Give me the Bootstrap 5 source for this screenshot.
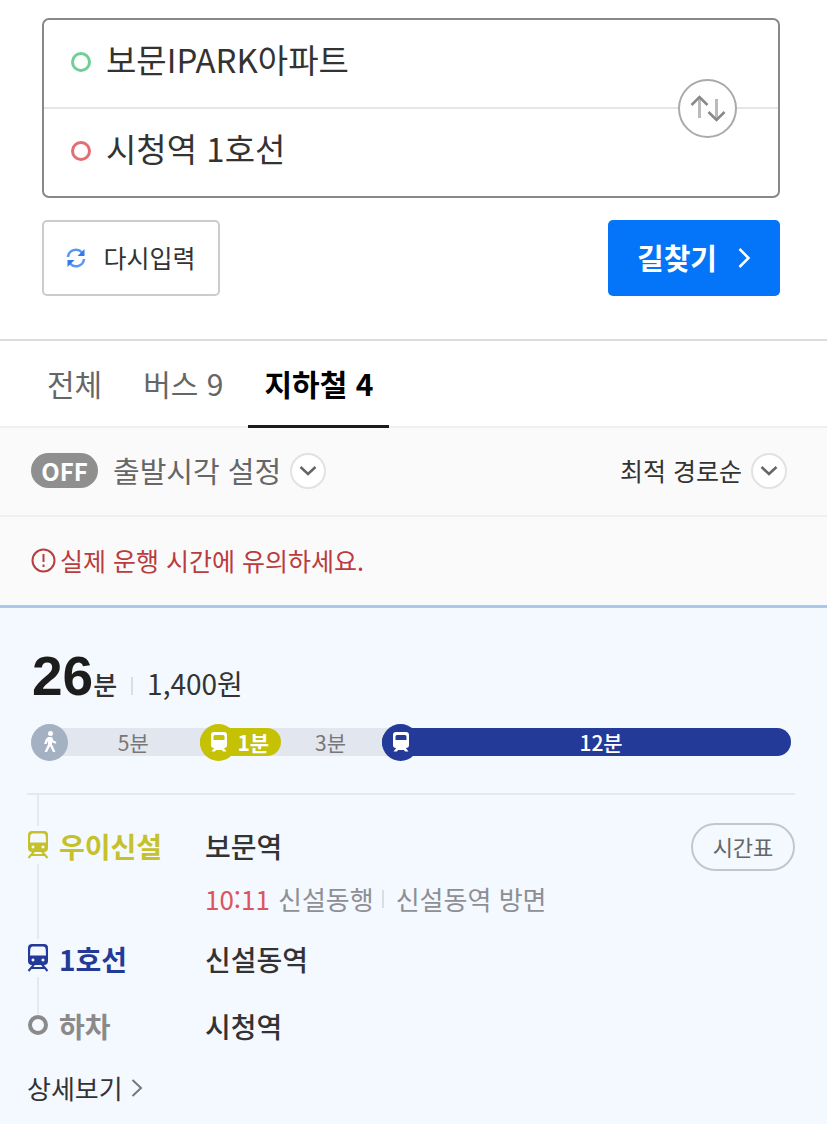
<!DOCTYPE html>
<html lang="ko">
<head>
<meta charset="utf-8">
<meta name="viewport" content="width=device-width, initial-scale=1">
<title>길찾기</title>
<link href="https://cdn.jsdelivr.net/npm/bootstrap@5.3.0/dist/css/bootstrap.min.css" rel="stylesheet">
<style>
  body { font-family: "Noto Sans CJK KR", sans-serif; color: #333; line-height: 36px; }
  button, input { font-family: inherit; }
  .search-area { padding: 18px 47px 43px 42px; border-bottom: 2px solid #ddd; }
  .route-box { border: 2px solid #888; border-radius: 7px; }
  .route-row { height: 87px; padding: 0 100px 3px 27px; gap: 15px; }
  .route-row + .route-row { border-top: 2px solid #e5e5e5; height: 89px; }
  .route-row .form-control { font-size: 33px; line-height: 48px; color: #333; box-shadow: none; padding: 0 0 6px; }
  .point { width: 20px; height: 20px; border: 3px solid #6fcf97; border-radius: 50%; }
  .point-end { border-color: #e26d74; }
  .swap { right: 41px; top: 59px; width: 59px; height: 59px; border: 2px solid #aaa; border-radius: 50%; background: #fff; }
  .action-row { margin-top: 22px; }
  .action-row .btn { height: 76px; border-radius: 5px; }
  .btn-reset { width: 178px; border: 2px solid #ccc; font-size: 25px; color: #333; gap: 17px; background: #fff; }
  .btn-find { width: 172px; font-size: 29px; font-weight: 700; color: #fff; background: #0475f8; gap: 21px; }
  .btn-find:hover { color: #fff; background: #0467db; }
  .mode-tabs { padding-left: 31px; gap: 9px; border-bottom: 2px solid #f0f0f0; }
  .mode-tabs .nav-link { padding: 24px 16px; margin-bottom: -2px; font-size: 30px; line-height: 36px; color: #666; border-bottom: 3px solid transparent; border-radius: 0; }
  .mode-tabs .active { color: #000; font-weight: 700; border-bottom-color: #1c1c1e; }
  .option-row { height: 89px; padding: 0 40px 2px 31px; background: #fafafa; border-bottom: 2px solid #f0f0f0; }
  .off-pill { width: 67px; height: 35px; border-radius: 18px; background: #8f8f8f; color: #fff; font-size: 24px; font-weight: 700; line-height: 33px; }
  .drop { font-size: 25px; color: #333; gap: 9px; }
  .drop-time { font-size: 29px; color: #666; margin-left: 15px; }
  .chev { width: 36px; height: 36px; border: 2px solid #e2e2e2; border-radius: 50%; background: #fff; }
  .notice { height: 91px; padding: 0 31px 2px; gap: 4px; font-size: 25px; color: #b93c3f; background: #fafafa; border-bottom: 3px solid #aac8ee; }
  .result { padding: 32px 32px 14px 27px; background: #f4f8ff; }
  .summary { padding-left: 5px; height: 72px; padding-top: 8px; }
  .minutes { font: 700 55px/56px "Liberation Sans", sans-serif; color: #1c1c1c; }
  .minutes-unit { font-size: 26px; font-weight: 500; }
  .fare { font-size: 28px; }
  .bar-sep { width: 2px; height: 18px; background: #d9dde5; margin: 0 14px; }
  .leg-bar { margin: 11px 4px 0; padding: 5px 0; }
  .leg { height: 28px; font-size: 21px; line-height: 28px; color: #777; background: #e2e6ee; }
  .leg-icon { width: 37px; height: 37px; border-radius: 50%; background: #a3b1c2; }
  .leg-first { border-radius: 14px 0 0 14px; }
  .leg-ride { color: #fff; font-weight: 500; border-radius: 14px; }
  .leg-label { padding: 0 2px 1px 0; }
  .under { background: #e2e6ee; }
  .under-last { border-radius: 0 14px 14px 0; }
  .ui-line { background: #c5c105; }
  .line-one { background: #243a98; }
  .steps { margin: 32px 0 0; border-top: 2px solid #e4e8f2; }
  .step { font-size: 28px; line-height: 40px; }
  .rail { width: 22px; margin-right: 10px; }
  .stem { width: 2px; background: #e4e8f2; }
  .stem-top { height: 31px; flex: none; }
  .stem-end { height: 8px; flex: none; }
  .rail-icon { height: 38px; flex: none; }
  .line-name { width: 146px; font-weight: 700; }
  .station { font-weight: 500; }
  .first-pad { padding-top: 31px; }
  .second-line { font-size: 26px; line-height: 36px; margin: 15px 0 22px; color: #8d8f94; }
  .second-line .bar-sep { margin: 0 12px 0 8px; }
  .depart { color: #dd5559; margin-right: 8px; }
  .station-mid { padding-bottom: 27px; }
  .c-ui { color: #c5c12a; }
  .c-one { color: #243a98; }
  .c-end { color: #8a8a8a; }
  .btn-timetable { width: 104px; height: 48px; border: 2px solid #c4c6ca; border-radius: 24px; font-size: 22px; line-height: 36px; color: #666; padding: 3px 0 5px; margin-top: 28px; }
  .more { font-size: 26px; color: #333; margin-top: 24px; gap: 8px; }
</style>
</head>
<body class="min-vh-100 d-flex flex-column">
<svg class="d-none" aria-hidden="true">
  <symbol id="train" viewBox="0 0 22 28">
    <path fill="currentColor" fill-rule="evenodd" d="M5 0h12q4 0 4 4v13q0 4-4 4H5q-4 0-4-4V4q0-4 4-4zM5.500 2.500Q3.500 2.500 3.300 5L3 11.500h16L18.700 5q-.2-2.500-2.200-2.500zM6 14.500a1.500 1.500 0 1 0 .01 0zM16 14.500a1.500 1.500 0 1 0 .01 0z"/>
    <path fill="none" stroke="currentColor" stroke-width="2" d="M7 20.500 1.500 27M15 20.500 20.500 27M4.500 24h13"/>
  </symbol>
  <symbol id="train-solid" viewBox="0 0 18 20">
    <path fill="currentColor" fill-rule="evenodd" d="M4 0h10q3 0 3 3v10q0 3-3 3H4q-3 0-3-3V3q0-3 3-3zM5 3Q3.500 3 3.500 4.500V8h11V4.500Q14.500 3 13 3z"/>
    <path fill="currentColor" d="M5 15h8l3.500 4.500H13L12 18H6l-1 1.500H1.500z"/>
  </symbol>
  <symbol id="chevron" viewBox="0 0 18 12">
    <path fill="none" stroke="#666" stroke-width="2.500" d="m1.500 2 7.500 7L16.500 2"/>
  </symbol>
</svg>

<form class="search-area" onsubmit="return false">
  <div class="route-box position-relative">
    <div class="route-row d-flex align-items-center">
      <label class="point flex-shrink-0" for="from" aria-label="출발지"></label>
      <input class="form-control border-0 bg-transparent" id="from" value="보문IPARK아파트">
    </div>
    <div class="route-row d-flex align-items-center">
      <label class="point point-end flex-shrink-0" for="to" aria-label="도착지"></label>
      <input class="form-control border-0 bg-transparent" id="to" value="시청역 1호선">
    </div>
    <button type="button" class="swap position-absolute p-0 d-flex align-items-center justify-content-center" aria-label="출발지와 도착지 바꾸기">
      <svg width="36" height="27" viewBox="0 0 36 27" fill="none" stroke-width="3"><path stroke="#bbb" d="M9.500 3v20M26.500 4v20"/><path stroke="#888" stroke-width="2.500" d="m1.500 10 8-8 8 8M18.500 17l8 8 8-8"/></svg>
    </button>
  </div>
  <div class="action-row d-flex justify-content-between">
    <button type="reset" class="btn btn-reset p-0 d-flex align-items-center justify-content-center">
      <svg width="20" height="20" viewBox="0 0 20 20" fill="none"><path stroke="#5a95f5" stroke-width="2.500" d="M2 9a8 8 0 0 1 14-4.500M18 11a8 8 0 0 1-14 4.500"/><path fill="#3478f0" d="M18.500 1v7h-7zM1.500 19v-7h7z"/></svg>
      다시입력
    </button>
    <button type="submit" class="btn btn-find p-0 d-flex align-items-center justify-content-center">
      길찾기
      <svg width="13" height="20" viewBox="0 0 13 20" fill="none" stroke="#fff" stroke-width="2.500"><path d="m1.500 1 9 9-9 9"/></svg>
    </button>
  </div>
</form>

<nav class="mode-tabs nav flex-nowrap">
  <a class="nav-link" href="#">전체</a>
  <a class="nav-link" href="#">버스 9</a>
  <a class="nav-link active" href="#" aria-current="page">지하철 4</a>
</nav>

<div class="option-row d-flex align-items-center">
  <button type="button" class="off-pill border-0 p-0">OFF</button>
  <button type="button" class="drop drop-time btn border-0 p-0 d-flex align-items-center">출발시각 설정
    <span class="chev d-flex align-items-center justify-content-center"><svg width="18" height="12"><use href="#chevron"/></svg></span>
  </button>
  <button type="button" class="drop btn border-0 p-0 d-flex align-items-center ms-auto">최적 경로순
    <span class="chev d-flex align-items-center justify-content-center"><svg width="18" height="12"><use href="#chevron"/></svg></span>
  </button>
</div>

<p class="notice mb-0 d-flex align-items-center">
  <svg class="flex-shrink-0" width="25" height="25" viewBox="0 0 25 25" fill="none" stroke="#b93c3f" stroke-width="2"><circle cx="12.500" cy="12.500" r="11"/><path d="M12.500 6v8M12.500 16.500V19"/></svg>
  실제 운행 시간에 유의하세요.
</p>

<main class="result flex-grow-1">
  <div class="summary d-flex align-items-baseline">
    <span class="minutes">26</span><span class="minutes-unit">분</span>
    <span class="bar-sep"></span>
    <span class="fare">1,400원</span>
  </div>

  <div class="leg-bar d-flex align-items-center">
    <div class="leg-first leg d-flex align-items-center" style="width:22.300%">
      <span class="leg-icon d-flex align-items-center justify-content-center flex-shrink-0">
        <svg width="14" height="22" viewBox="0 0 14 22" fill="#fff"><circle cx="7.500" cy="2.500" r="2.500"/><path d="M5 6h4l1.500 3.500 3 1.500-1 1.800-3.500-1.500v2.200l3.500 7.500H10l-3-6-3 6H1.500L5 13.500V10l-1.500 3H1.200L2.500 8.500z"/></svg>
      </span>
      <span class="leg-label flex-grow-1 text-center">5분</span>
    </div>
    <div class="under" style="width:10.600%">
      <div class="leg leg-ride ui-line d-flex align-items-center fw-bold">
        <span class="leg-icon ui-line d-flex align-items-center justify-content-center flex-shrink-0"><svg width="18" height="20"><use href="#train-solid"/></svg></span>
        <span class="leg-label flex-grow-1">1분</span>
      </div>
    </div>
    <div class="leg text-center leg-label" style="width:13.300%">3분</div>
    <div class="under under-last flex-grow-1">
      <div class="leg leg-ride line-one d-flex align-items-center">
        <span class="leg-icon line-one d-flex align-items-center justify-content-center flex-shrink-0"><svg width="18" height="20"><use href="#train-solid"/></svg></span>
        <span class="leg-label flex-grow-1 text-center pe-2">12분</span>
      </div>
    </div>
  </div>

  <ol class="steps list-unstyled">
    <li class="step d-flex">
      <div class="rail d-flex flex-column align-items-center">
        <span class="stem stem-top"></span>
        <span class="rail-icon c-ui d-flex align-items-center"><svg width="22" height="28"><use href="#train"/></svg></span>
        <span class="stem flex-grow-1"></span>
      </div>
      <div class="line-name c-ui first-pad">우이신설</div>
      <div class="flex-grow-1 first-pad">
        <div class="station">보문역</div>
        <div class="second-line d-flex align-items-center"><span class="depart">10:11</span>신설동행<span class="bar-sep"></span>신설동역 방면</div>
      </div>
      <button type="button" class="btn btn-timetable">시간표</button>
    </li>
    <li class="step d-flex">
      <div class="rail d-flex flex-column align-items-center">
        <span class="rail-icon c-one d-flex align-items-center"><svg width="22" height="28"><use href="#train"/></svg></span>
        <span class="stem flex-grow-1"></span>
      </div>
      <div class="line-name c-one">1호선</div>
      <div class="station station-mid">신설동역</div>
    </li>
    <li class="step d-flex">
      <div class="rail d-flex flex-column align-items-center">
        <span class="stem stem-end"></span>
        <svg width="22" height="22" viewBox="0 0 22 22" fill="none" stroke="#8a8a8a" stroke-width="4"><circle cx="11" cy="11" r="8"/></svg>
      </div>
      <div class="line-name c-end">하차</div>
      <div class="station">시청역</div>
    </li>
  </ol>
  <a class="more d-inline-flex align-items-center text-decoration-none" href="#">상세보기
    <svg width="12" height="18" viewBox="0 0 12 18" fill="none" stroke="#777" stroke-width="2"><path d="m1.500 1 8.500 8-8.500 8"/></svg>
  </a>
</main>
<script src="https://cdn.jsdelivr.net/npm/bootstrap@5.3.0/dist/js/bootstrap.bundle.min.js"></script>
</body>
</html>
